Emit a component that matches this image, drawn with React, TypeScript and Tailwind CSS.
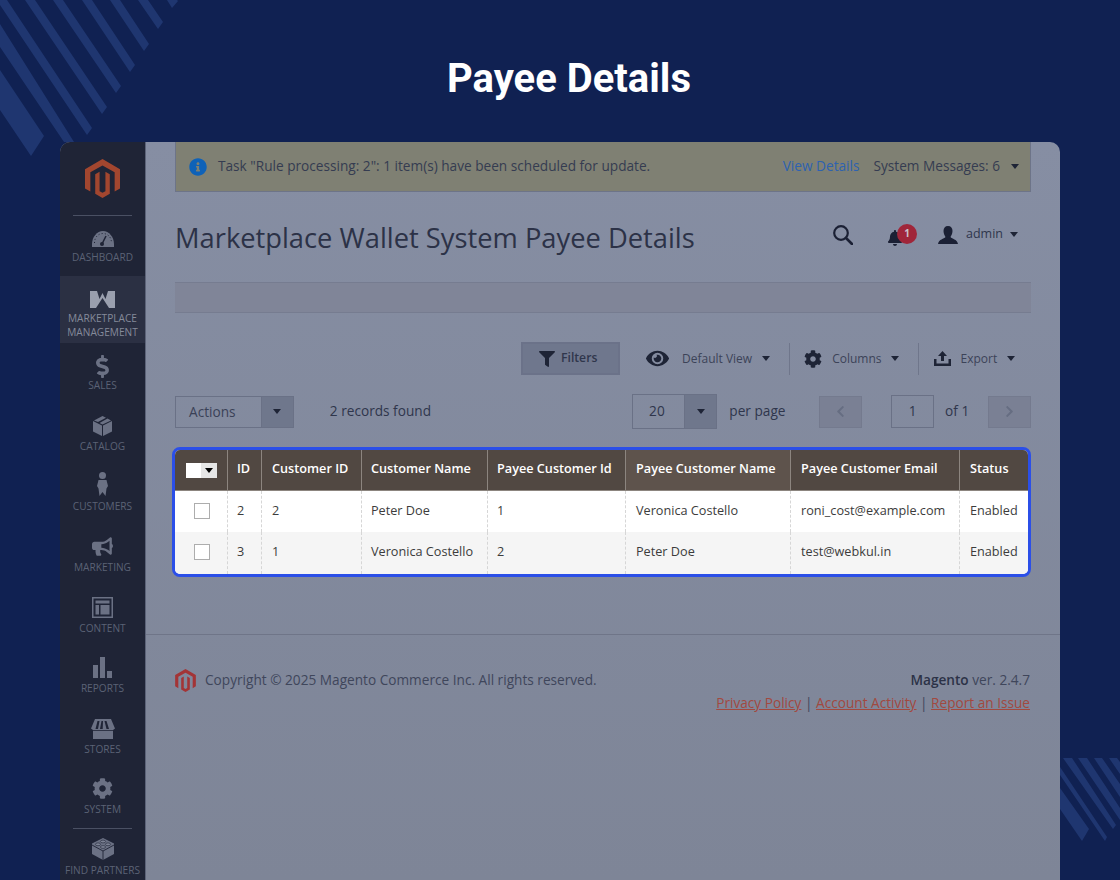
import React from "react";
import { FaDollarSign, FaBullhorn, FaCog, FaBell, FaFilter, FaEye, FaChevronLeft, FaChevronRight, FaInfoCircle } from "react-icons/fa";

const Caret = ({ c = "border-t-[#1e2436]" }: { c?: string }) => (
  <span className={`inline-block h-0 w-0 border-x-[4px] border-t-[5px] border-x-transparent ${c}`} />
);

const MageLogo = ({ className, fill }: { className: string; fill: string }) => (
  <svg viewBox="0 0 36 40" className={className}>
    <path fill={fill} d="M18 0 36 10.4V30.2L30.5 33.4V13.6L18 6.6 5.5 13.6V33.4L0 30.2V10.4ZM18 40 10.5 35.7V15.6L15 13V33L18 34.6 21 33V13L25.5 15.6V35.7Z" />
  </svg>
);

const I = "#6b7184";
const D = "#1f2436";
const icons: Record<string, React.ReactNode> = {
  dash: (
    <svg viewBox="0 0 22 16" className="h-[16px] w-[22px]">
      <path fill={I} d="M0 16V13C0 6 5 0 11 0S22 6 22 13V16Z" />
      <path fill="none" stroke={D} strokeWidth="1" strokeDasharray="1 2.2" d="M2.5 12C2.5 6 6.5 2.5 11 2.5S19.5 6 19.5 12" />
      <path stroke={D} strokeWidth="1.5" d="M10 13 14 5" />
      <circle cx="10" cy="13" r="2" fill={D} />
    </svg>
  ),
  w: (
    <svg viewBox="0 0 25 17" className="h-[17px] w-[25px]">
      <path fill="#9a9fae" d="M0 0H7L9.5 8 12.5 2 15.5 8 18 0H25V17H19L12.5 7 6 17H0Z" />
    </svg>
  ),
  dollar: <span className="relative top-[3px]"><FaDollarSign color={I} size={23} /></span>,
  box: (
    <svg viewBox="0 0 19 20" className="h-[20px] w-[19px]">
      <path fill={I} d="M0 5 9 9.5V20L0 15.5ZM19 5V15.5L10 20V9.5ZM9.5 0 13 1.7 5 6 1 4.5ZM14.5 2.4 18 4.5 9.5 8.5 6.5 7Z" />
    </svg>
  ),
  person: (
    <svg viewBox="0 0 11 24" className="h-[24px] w-[11px]">
      <circle cx="5.5" cy="3.5" r="3.5" fill={I} />
      <path fill={I} d="M1.5 8H9.5L11 14 9.5 16.5 8.5 24 5.5 20 2.5 24 1.5 16.5 0 14Z" />
    </svg>
  ),
  horn: <FaBullhorn color={I} size={21} />,
  content: (
    <svg viewBox="0 0 21 21" className="h-[21px] w-[21px]">
      <path fill={I} fillRule="evenodd" d="M0 0H21V21H0ZM1.5 1.5V19.5H19.5V1.5ZM3.5 3.5H17.5V6.5H3.5ZM3.5 8H7V17.5H3.5ZM8.5 8H17.5V17.5H8.5Z" />
    </svg>
  ),
  bars: (
    <svg viewBox="0 0 19 21" className="h-[21px] w-[19px]">
      <path fill={I} d="M0 8H5V21H0ZM7 0H12V21H7ZM14 14H19V21H14Z" />
    </svg>
  ),
  store: (
    <svg viewBox="0 0 24 20" className="h-[20px] w-[24px]">
      <path fill={I} d="M4 0H20L24 9.5 22 11V20H2V11L0 9.5Z" />
      <path fill={D} d="M6.5 2H8.5L7 10H4.5ZM10.5 2H12L11.7 10H9ZM13.5 2H15.5L18 10H15.5Z" />
      <path stroke={D} strokeWidth="0.8" d="M2 11.5H22" />
    </svg>
  ),
  gear: <FaCog color={I} size={21} />,
  lego: (
    <svg viewBox="0 0 22 22" className="h-[22px] w-[22px]">
      <path fill={I} d="M11 0 22 5.5V16L11 22 0 16V5.5Z" />
      <path stroke={D} strokeWidth="0.9" fill="none" d="M0 7 11 13 22 7M11 13V22" />
      <g fill="#7d8395" stroke={D} strokeWidth="0.6">
        <ellipse cx="11" cy="3.5" rx="2.6" ry="1.4" />
        <ellipse cx="6" cy="6.3" rx="2.6" ry="1.4" />
        <ellipse cx="16" cy="6.3" rx="2.6" ry="1.4" />
        <ellipse cx="11" cy="9" rx="2.6" ry="1.4" />
      </g>
    </svg>
  ),
};

const nav: { icon: string; label: string[]; h: string; iconH: string }[] = [
  { icon: "dash", label: ["DASHBOARD"], h: "h-[60px]", iconH: "h-[34px]" },
  { icon: "w", label: ["MARKETPLACE", "MANAGEMENT"], h: "h-[67px]", iconH: "h-[35px]" },
  { icon: "dollar", label: ["SALES"], h: "h-[60px]", iconH: "h-[35px]" },
  { icon: "box", label: ["CATALOG"], h: "h-[61px]", iconH: "h-[36px]" },
  { icon: "person", label: ["CUSTOMERS"], h: "h-[60px]", iconH: "h-[35px]" },
  { icon: "horn", label: ["MARKETING"], h: "h-[61px]", iconH: "h-[36px]" },
  { icon: "content", label: ["CONTENT"], h: "h-[61px]", iconH: "h-[36px]" },
  { icon: "bars", label: ["REPORTS"], h: "h-[60px]", iconH: "h-[35px]" },
  { icon: "store", label: ["STORES"], h: "h-[61px]", iconH: "h-[36px]" },
  { icon: "gear", label: ["SYSTEM"], h: "h-[61px]", iconH: "h-[35px]" },
];

const rows = [
  ["2", "2", "Peter Doe", "1", "Veronica Costello", "roni_cost@example.com", "Enabled"],
  ["3", "1", "Veronica Costello", "2", "Peter Doe", "test@webkul.in", "Enabled"],
];
const heads = ["ID", "Customer ID", "Customer Name", "Payee Customer Id", "Payee Customer Name", "Payee Customer Email", "Status"];
const colW = ["w-[52px]", "w-[34px]", "w-[100px]", "w-[126px]", "w-[138px]", "w-[165px]", "w-[169px]", "w-[69px]"];
const colP = ["pl-[9px]", "pl-[10px]", "pl-[9px]", "pl-[9px]", "pl-[10px]", "pl-[10px]", "pl-[10px]"];

function SideItem({ icon, label, h, iconH, active }: { icon: string; label: string[]; h: string; iconH: string; active?: boolean }) {
  return (
    <div className={`flex shrink-0 flex-col items-center ${h} ${active ? "bg-[#2b3043] text-[#858a9a]" : "text-[#5b6275]"}`}>
      <div className={`flex ${iconH} items-end pb-[3px]`}>{icons[icon]}</div>
      {label.map((l) => (
        <div key={l} className="whitespace-nowrap text-[10.14px] leading-[14px]">{l}</div>
      ))}
    </div>
  );
}

export default function App() {
  return (
    <div className="relative h-[880px] w-[1120px] overflow-hidden bg-[#102152] font-['Open_Sans',sans-serif]">
      <svg className="absolute left-0 top-0 h-[880px] w-[1120px]" viewBox="0 0 1120 880">
        <g fill="#1f3670">
          <path d="M167 0H177L178 1 172 8ZM138 0H148L163 22 158 29ZM110 0H120L149 44 144 51ZM82 0H92L135 65 130 72ZM53 0H63L121 86 116 93ZM25 0H35L107 107 102 114ZM0 0H7L92 128 87 135 0 5ZM0 24 74 142H64L0 47ZM0 70 44 136 31 156 0 110Z" />
          <path d="M1060 788 1089 829 1082 841 1060 809ZM1060 767 1107 837 1105 841 1060 775ZM1063 758H1072L1116 825 1113 829ZM1078 758H1087L1120 808V820ZM1094 758H1102L1120 784V797ZM1109 758H1117L1120 762V774Z" />
        </g>
      </svg>

      <h1 className="relative flex h-[142px] items-center justify-center pl-[18px] pt-[15px] font-['Roboto',sans-serif] text-[40px] font-bold text-white">Payee Details</h1>

      <div className="relative mx-[60px] flex h-[738px] overflow-hidden rounded-t-[10px] bg-gradient-to-b from-[#868ea3] to-[#7e8597]">
        <aside className="flex w-[86px] shrink-0 flex-col border-r border-[#5c6378] bg-[#1f2436]">
          <div className="flex h-[73px] shrink-0 items-start justify-center pt-[17px]">
            <MageLogo className="h-[39px] w-[35px]" fill="#a2462f" />
          </div>
          <div className="mx-[13px] h-px shrink-0 bg-[#4a5063]" />
          {nav.map((n, i) => (
            <SideItem key={n.icon} {...n} active={i === 1} />
          ))}
          <div className="mx-[13px] h-px shrink-0 bg-[#4a5063]" />
          <SideItem icon="lego" label={["FIND PARTNERS"]} h="h-[50px]" iconH="h-[34px]" />
        </aside>

        <main className="flex min-w-0 flex-1 flex-col text-[#2f364c]">
          <div className="pl-[29px] pr-[29px]">
            <div className="flex h-[50px] items-center border-x border-b border-[#6d7488] bg-[#7f8073] pl-[13px] pr-[11px] text-[13.65px] text-[#353c51]">
              <FaInfoCircle className="mr-[11px] text-[#0f62b8]" size={18} />
              <span className="flex-1">Task "Rule processing: 2": 1 item(s) have been scheduled for update.</span>
              <span className="mr-[14px] text-[#2d62b0]">View Details</span>
              <span className="mr-[11px]">System Messages: 6</span>
              <Caret />
            </div>

            <div className="flex h-[90px] items-center pt-[2px]">
              <div className="flex-1 text-[27.3px] text-[#2c3247]">Marketplace Wallet System Payee Details</div>
              <div className="mb-[7px] flex items-center">
                <svg viewBox="0 0 20 20" className="mr-[34px] h-[20px] w-[20px]">
                  <circle cx="8" cy="8" r="6.8" fill="none" stroke="#1b2034" strokeWidth="2.2" />
                  <path d="M13 13 19 19" stroke="#1b2034" strokeWidth="2.6" strokeLinecap="round" />
                </svg>
                <div className="relative mr-[33px] mt-[6px] h-[16px] w-[18px]">
                  <FaBell className="text-[#1b2034]" size={16} />
                  <span className="absolute left-[10px] top-[-6px] flex h-[20px] w-[20px] items-center justify-center rounded-full bg-[#a0263a] text-[10px] font-bold text-[#c9c3cb]">1</span>
                </div>
                <svg viewBox="0 0 20 18" className="mr-[8px] h-[18px] w-[20px]">
                  <path fill="#1b2034" d="M10 0C13 0 14.5 2 14.5 5S13 10 12.5 11C14 13 19 13 20 18H0C1 13 6 13 7.5 11 7 10 5.5 8 5.5 5S7 0 10 0Z" />
                </svg>
                <span className="mr-[7px] text-[12.5px]">admin</span>
                <Caret />
                <div className="w-[13px]" />
              </div>
            </div>

            <div className="h-[31px] border-y border-[#767c90] bg-[#808598]" />

            <div className="mt-[29px] flex h-[33px] items-center text-[12px] text-[#3c4358]">
              <div className="ml-[346px] flex h-[33px] w-[99px] items-center gap-[6px] border-2 border-[#6b7289] bg-[#6f778d] pl-[16px] text-[12.2px] font-semibold text-[#2f364c]">
                <FaFilter className="text-[#1e2436]" size={16} />
                Filters
              </div>
              <FaEye className="ml-[26px] text-[#1e2436]" size={23} />
              <span className="ml-[13px]">Default View</span>
              <span className="ml-[10px] flex"><Caret /></span>
              <div className="ml-[19px] h-[32px] w-px bg-[#6f768b]" />
              <FaCog className="ml-[14px] text-[#1e2436]" size={18} />
              <span className="ml-[10px]">Columns</span>
              <span className="ml-[9px] flex"><Caret /></span>
              <div className="ml-[19px] h-[32px] w-px bg-[#6f768b]" />
              <svg viewBox="0 0 17 15" className="ml-[15px] h-[15px] w-[17px]">
                <path fill="#1e2436" d="M8.5 0 13 5H10V10H7V5H4ZM0 8H2.5V12.5H14.5V8H17V15H0Z" />
              </svg>
              <span className="ml-[10px]">Export</span>
              <span className="ml-[10px] flex"><Caret /></span>
            </div>

            <div className="mt-[19px] flex h-[35px] items-center text-[13.65px]">
              <div className="flex h-[32px] w-[119px] border border-[#6a7186]">
                <span className="flex flex-1 items-center border-r border-[#6a7186] pl-[13px] pt-[1px] text-[#3a4157]">Actions</span>
                <span className="flex w-[31px] items-center justify-center bg-[#6f778c]"><Caret /></span>
              </div>
              <span className="ml-[36px] w-[303px]">2 records found</span>
              <div className="flex h-[35px] w-[85px] border border-[#6a7186]">
                <span className="flex flex-1 items-center justify-center pr-[4px]">20</span>
                <span className="flex w-[32px] items-center justify-center border-l border-[#6a7186] bg-[#6f778c]"><Caret /></span>
              </div>
              <span className="ml-[12px] w-[90px]">per page</span>
              <span className="flex h-[32px] w-[43px] items-center justify-center border border-[#747a8e] bg-[#7a8094] text-[#666d82]"><FaChevronLeft size={13} /></span>
              <span className="ml-[29px] flex h-[33px] w-[43px] items-center justify-center border border-[#6a7186]">1</span>
              <span className="ml-[11px] w-[43px]">of 1</span>
              <span className="flex h-[32px] w-[43px] items-center justify-center border border-[#747a8e] bg-[#7a8094] text-[#666d82]"><FaChevronRight size={13} /></span>
            </div>

            <div className="-ml-[3px] mt-[18px] h-[130px] w-[859px] overflow-hidden rounded-[8px] border-[3px] border-[#2b4fe8] bg-white">
              <table className="w-[853px] table-fixed border-separate border-spacing-0 text-[12.68px]">
                <colgroup>
                  {colW.map((w, i) => (
                    <col key={i} className={w} />
                  ))}
                </colgroup>
                <thead>
                  <tr className="h-[41px] bg-[#514842] text-left text-white">
                    <th className="border-b border-[#8c857f] pl-[11px]">
                      <span className="flex h-[15px] w-[31px] bg-[#e6e6e6]">
                        <span className="w-[15px] bg-white" />
                        <span className="flex flex-1 items-center justify-center"><Caret c="border-t-black" /></span>
                      </span>
                    </th>
                    {heads.map((h, i) => (
                      <th key={h} className={`whitespace-nowrap border-b border-l border-[#8c857f] pb-[2px] font-semibold ${colP[i]} ${i === 4 ? "bg-[#5e534c]" : ""}`}>{h}</th>
                    ))}
                  </tr>
                </thead>
                <tbody className="text-[#3c3c3c]">
                  {rows.map((r, ri) => (
                    <tr key={ri} className={ri === 0 ? "h-[41px] bg-white" : "h-[42px] bg-[#f5f5f5]"}>
                      <td className="pb-[2px] pl-[19px]">
                        <span className="block h-[16px] w-[16px] border border-[#adadad] bg-white" />
                      </td>
                      {r.map((c, i) => (
                        <td key={i} className={`whitespace-nowrap border-l border-dashed border-[#d6d6d6] pb-[2px] ${colP[i]}`}>{c}</td>
                      ))}
                    </tr>
                  ))}
                </tbody>
              </table>
            </div>
          </div>

          <footer className="mt-[57px] flex items-start justify-between border-t border-[#6f7588] pl-[29px] pr-[30px] pt-[34px] text-[13.65px] text-[#3f465b]">
            <div className="flex items-start">
              <MageLogo className="mr-[9px] h-[23px] w-[21px]" fill="#a33436" />
              <span className="mt-[1px]">Copyright © 2025 Magento Commerce Inc. All rights reserved.</span>
            </div>
            <div className="text-right">
              <div className="mt-[1px] h-[23px]"><b className="font-semibold text-[#2c3247]">Magento</b> ver. 2.4.7</div>
              <div>
                <span className="text-[#a2493f] underline">Privacy Policy</span> | <span className="text-[#a2493f] underline">Account Activity</span> | <span className="text-[#a2493f] underline">Report an Issue</span>
              </div>
            </div>
          </footer>
        </main>
      </div>
    </div>
  );
}
